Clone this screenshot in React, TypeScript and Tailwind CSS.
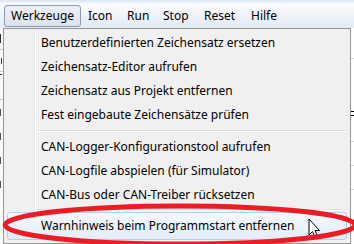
import React from "react";

const groupA = [
  "Benutzerdefinierten Zeichensatz ersetzen",
  "Zeichensatz-Editor aufrufen",
  "Zeichensatz aus Projekt entfernen",
  "Fest eingebaute Zeichensätze prüfen",
];

const groupB = [
  "CAN-Logger-Konfigurationstool aufrufen",
  "CAN-Logfile abspielen (für Simulator)",
  "CAN-Bus oder CAN-Treiber rücksetzen",
];

const topItems = [
  { label: "Icon", w: "w-[39px]" },
  { label: "Run", w: "w-[36px]" },
  { label: "Stop", w: "w-[41px]" },
  { label: "Reset", w: "w-[47px]" },
  { label: "Hilfe", w: "w-[47px]" },
];

function MenuItem({ label }: { label: string }) {
  return (
    <div className="h-[24px] flex items-center pl-[37px] text-black">
      {label}
    </div>
  );
}

function Separator({ h }: { h: string }) {
  return (
    <div className={`${h} flex flex-col justify-center pl-[32px] pr-[2px]`}>
      <div className="h-px bg-[#e0e0e0]" />
      <div className="h-px bg-white" />
    </div>
  );
}

// background list behind the menu, only its last pixels peek out on the left
function LeftStrip() {
  return (
    <div className="w-[3px] bg-[#fafafa] flex flex-col">
      <div className="h-[22px] flex justify-start items-center border-b border-[#c8c8c8]">
        <div className="w-px h-[9px] bg-[#333]" />
      </div>
      <div className="h-[22px] flex justify-start items-center border-b border-[#c8c8c8]">
        <div className="w-[2px] h-[6px] border-r border-[#333]" />
      </div>
      <div className="h-[28px] flex justify-start items-start pt-[2px] border-b border-[#c8c8c8]">
        <div className="w-[2px] h-px bg-[#333]" />
      </div>
      {[0, 1, 2, 3].map((i) => (
        <div key={i} className="h-[24px] flex justify-start items-center">
          <div className="w-[2px] h-[7px] border-l border-[#555]" />
        </div>
      ))}
    </div>
  );
}

function RightStrip() {
  return (
    <div className="w-[3px] bg-white flex flex-col">
      <div className="h-[31px] border-b border-[#d0d0d0]" />
      <div className="h-[53px] border-b border-black" />
      <div className="h-[4px] border-b border-black" />
      <div className="h-[26px] border-b border-[#d0d0d0]" />
      <div className="h-[24px] border-b border-[#d0d0d0]" />
      <div className="h-[24px] border-b border-[#d0d0d0]" />
      <div className="flex-1" />
    </div>
  );
}

export default function App() {
  return (
    <div
      className="relative w-[354px] h-[244px] overflow-hidden bg-white text-[12px] leading-none"
      style={{ fontFamily: '"Noto Sans", "Segoe UI", sans-serif' }}
    >
      {/* menu bar */}
      <div className="h-[28px] flex items-end pb-[1px] bg-[linear-gradient(#d9e4f3_0px,#fbfcfe_4px,#f0f4fa_14px,#e2eaf5_28px)]">
        <div className="ml-[4px] w-[77px] h-[22px] flex items-center pl-[6px] rounded-[3px] border border-[#8c9aac] bg-[linear-gradient(#eef1f5,#dce3ec)] text-black">
          Werkzeuge
        </div>
        {topItems.map((t) => (
          <div key={t.label} className={`${t.w} h-[22px] flex items-center pl-[7px] text-black`}>
            {t.label}
          </div>
        ))}
      </div>

      {/* content row */}
      <div className="flex h-[216px]">
        <LeftStrip />
        <div className="relative w-[348px] border border-[#979797] bg-[#f0f0f0] pt-[2px] flex flex-col">
          {/* gutter line */}
          <div className="absolute left-[30px] top-[2px] bottom-[2px] w-[2px] flex">
            <div className="w-px bg-[#e2e3e3]" />
            <div className="w-px bg-white" />
          </div>
          {groupA.map((l) => (
            <MenuItem key={l} label={l} />
          ))}
          <Separator h="h-[8px]" />
          {groupB.map((l) => (
            <MenuItem key={l} label={l} />
          ))}
          <Separator h="h-[5px]" />
          <div className="relative mx-[3px] h-[28px] flex items-center pl-[33px] rounded-[3px] border border-[#aed2f0] bg-[linear-gradient(#f3f8fd,#e2edfa)] text-black">
            Warnhinweis beim Programmstart entfernen
          </div>
        </div>
        <RightStrip />
      </div>

      {/* annotation overlay: red ellipse and mouse pointer */}
      <svg
        className="absolute left-0 top-0 pointer-events-none"
        width="354"
        height="244"
        viewBox="0 0 354 244"
      >
        <path
          d="M309 219 L309 235 L312.5 231.5 L315 237.5 L317.5 236.5 L315 230.5 L319.5 230.5 Z"
          fill="white"
          stroke="black"
          strokeWidth="1"
        />
        <ellipse
          cx="180"
          cy="225"
          rx="175"
          ry="19"
          fill="none"
          stroke="#ec1c24"
          strokeWidth="5"
        />
      </svg>
    </div>
  );
}
